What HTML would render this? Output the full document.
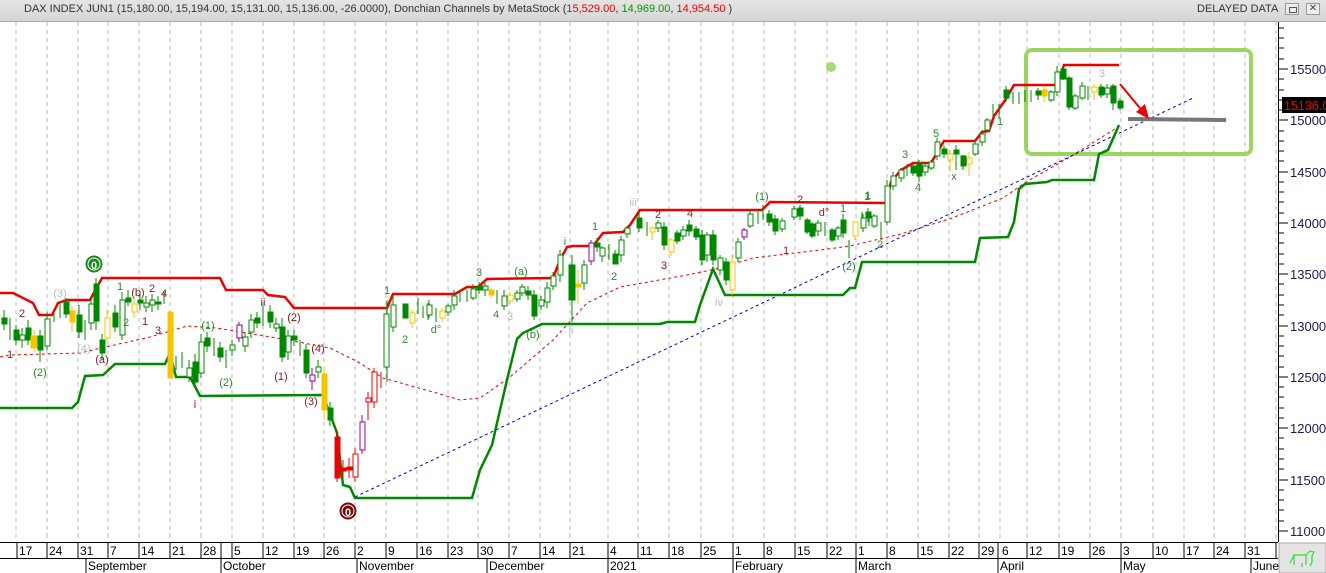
<!DOCTYPE html>
<html><head><meta charset="utf-8"><style>
html,body{margin:0;padding:0;background:#fff;width:1326px;height:573px;overflow:hidden;font-family:"Liberation Sans",sans-serif}
#hdr{position:absolute;left:0;top:0;width:1326px;height:21px;background:linear-gradient(#e4e4e4,#d6d6d6);border-bottom:1px solid #aaa;font-size:11px;color:#333;line-height:19px}
</style></head><body>
<div id="hdr"><span style="position:absolute;left:24px;top:0">DAX INDEX JUN1 (15,180.00, 15,194.00, 15,131.00, 15,136.00, -26.0000), Donchian Channels by MetaStock (<span style="color:#e00">15,529.00</span>, <span style="color:#090">14,969.00</span>, <span style="color:#e00">14,954.50</span> )</span>
<span style="position:absolute;left:1197px;top:0">DELAYED DATA</span>
<span style="position:absolute;left:1285px;top:3px;width:14px;height:12px;border:1px solid #999;background:#eee;box-sizing:border-box"><span style="position:absolute;left:3px;top:3px;width:6px;height:4px;border:1px solid #555"></span></span>
<span style="position:absolute;left:1306px;top:3px;width:14px;height:12px;border:1px solid #999;background:#eee;box-sizing:border-box;font-size:10px;line-height:10px;text-align:center;color:#444">✕</span>
</div>
<svg width="1326" height="573" style="position:absolute;left:0;top:0" xmlns="http://www.w3.org/2000/svg">
<g transform="translate(0,0)">
<g stroke="#bbb" stroke-dasharray="4,4" stroke-width="1">
<path d="M16 22V540M47 22V540M78 22V540M108 22V540M139 22V540M170 22V540M201 22V540M232 22V540M263 22V540M294 22V540M324 22V540M355 22V540M386 22V540M417 22V540M448 22V540M478 22V540M509 22V540M540 22V540M570 22V540M608 22V540M638 22V540M669 22V540M701 22V540M733 22V540M764 22V540M795 22V540M827 22V540M856 22V540M887 22V540M918 22V540M949 22V540M979 22V540M1000 22V540M1027 22V540M1059 22V540M1090 22V540M1121 22V540M1153 22V540M1184 22V540M1214 22V540M1245 22V540M1276 22V540"/>
</g>
<rect x="1026" y="50" width="225" height="104" rx="6" fill="none" stroke="#8fd14f" stroke-width="4" opacity="0.9"/>
<polyline fill="none" stroke="#e00" stroke-width="1" stroke-dasharray="3,3" points="0,357 10,355 80,353 110,346 150,337 187,326 217,328 277,338 330,348 360,363 383,378 440,394 460,400 480,398 510,377 553,340 587,303 620,287 687,275 720,268 753,258 820,250 850,246 901,234 952,218 1003,198 1026,182 1070,157 1118,127"/>
<line x1="355" y1="497" x2="1193" y2="98" stroke="#00d" stroke-width="1" stroke-dasharray="3,3"/>
<polyline fill="none" stroke="#e00" stroke-width="2.5" points="0,293 13,293 33,303 39,315 52,315 58,303 67,300 90,300 102,278 220,278 226,290 263,290 268,295 285,297 294,308 387,308 393,294 455,294 467,287 478,287 487,279 553,278 560,260 567,247 573,246 593,246 603,233 623,232 630,225 640,210 762,210 770,202 886,203 891,182 901,170 913,163 931,163 944,141 975,141 982,132 989,131 994,116 1006,99 1014,85 1057,85 1064,65 1119,65"/>
<polyline fill="none" stroke="#080" stroke-width="2.5" points="0,408 72,408 78,402 85,376 103,375 115,364 165,364 170,353 176,377 190,377 200,396 323,395 337,433 343,485 350,487 355,498 472,498 480,470 492,445 500,410 507,380 517,339 523,333 542,324 660,324 667,322 695,322 700,305 713,269 725,295 843,295 850,288 855,288 862,262 975,262 980,238 1008,237 1014,222 1019,189 1025,184 1047,182 1052,180 1094,180 1099,154 1108,150 1119,125"/>
<line x1="1128" y1="119" x2="1226" y2="120" stroke="#777" stroke-width="4"/>
<line x1="1120" y1="84" x2="1144" y2="113" stroke="#e00" stroke-width="2"/>
<polygon points="1149,119 1136,112 1145,104" fill="#e00"/>
<g stroke-width="1">
<g stroke="#080" fill="#080">
<path d="M4 310V330M10 318V340M16 325V345M28 320V345M40 330V362M54 312V322M60 302V318M66 298V318M79 305V338M85 320V340M96 278V330M102 334V360M115 305V332M128 290V306M140 294V310M158 296V310M164 292V304M176 356V370M182 352V368M195 354V388M207 332V352M214 338V356M220 342V362M226 350V368M257 312V328M270 305V328M282 318V362M294 330V346M300 340V356M306 344V378M330 402V426M418 298V314M428 303V320M423 306V318M436 308V322M460 290V302M467 290V302M479 282V294M497 290V304M528 286V300M534 290V320M547 282V308M572 255V322M597 238V252M609 244V260M615 250V264M639 212V232M647 222V236M664 222V250M677 230V244M689 220V236M696 226V240M702 230V265M713 230V265M726 258V285M758 210V224M763 205V220M769 210V226M775 215V235M800 205V220M807 218V234M812 222V238M825 222V236M832 228V242M843 214V238M849 240V258M862 212V226M868 208V222M869 212V226M881 222V240M913 164V176M919 160V182M944 146V158M956 145V170M963 155V170M999 104V118M1006 86V102M1013 92V104M1019 92V104M1025 90V102M1031 90V102M1038 88V100M1063 66V80M1069 76V110M1082 82V100M1088 86V100M1101 84V98M1107 86V98M1113 84V110M1120 98V110"/>
<rect x="2" y="318" width="5" height="6"/><rect x="14" y="330" width="5" height="10"/><rect x="26" y="328" width="5" height="12"/><rect x="38" y="336" width="5" height="14"/><rect x="64" y="302" width="5" height="12"/><rect x="77" y="315" width="5" height="17"/><rect x="94" y="284" width="5" height="37"/><rect x="100" y="340" width="5" height="13"/><rect x="113" y="313" width="5" height="14"/><rect x="126" y="298" width="5" height="4"/><rect x="138" y="300" width="5" height="3"/><rect x="156" y="302" width="5" height="2"/><rect x="193" y="362" width="5" height="20"/><rect x="205" y="338" width="5" height="8"/><rect x="218" y="348" width="5" height="9"/><rect x="255" y="318" width="5" height="5"/><rect x="268" y="312" width="5" height="10"/><rect x="280" y="327" width="5" height="30"/><rect x="292" y="336" width="5" height="4"/><rect x="304" y="350" width="5" height="23"/><rect x="328" y="408" width="5" height="12"/><rect x="403" y="304" width="5" height="14"/><rect x="477" y="286" width="5" height="4"/><rect x="526" y="291" width="5" height="4"/><rect x="532" y="295" width="5" height="21"/><rect x="569" y="265" width="6" height="35"/><rect x="595" y="243" width="5" height="4"/><rect x="613" y="254" width="5" height="10"/><rect x="637" y="218" width="5" height="10"/><rect x="662" y="227" width="5" height="18"/><rect x="675" y="233" width="5" height="8"/><rect x="687" y="225" width="5" height="6"/><rect x="694" y="229" width="5" height="8"/><rect x="700" y="235" width="5" height="25"/><rect x="711" y="235" width="5" height="25"/><rect x="724" y="262" width="5" height="18"/><rect x="767" y="214" width="5" height="8"/><rect x="773" y="219" width="5" height="12"/><rect x="798" y="208" width="5" height="8"/><rect x="805" y="220" width="5" height="12"/><rect x="810" y="224" width="5" height="12"/><rect x="830" y="230" width="5" height="10"/><rect x="841" y="220" width="5" height="13"/><rect x="866" y="212" width="5" height="6"/><rect x="911" y="166" width="5" height="7"/><rect x="917" y="163" width="5" height="13"/><rect x="942" y="149" width="5" height="5"/><rect x="954" y="150" width="5" height="4"/><rect x="961" y="156" width="5" height="10"/><rect x="1004" y="90" width="5" height="8"/><rect x="1036" y="91" width="5" height="4"/><rect x="1061" y="69" width="5" height="10"/><rect x="1067" y="78" width="5" height="29"/><rect x="1099" y="87" width="5" height="8"/><rect x="1111" y="86" width="5" height="17"/><rect x="1118" y="101" width="5" height="7"/>
</g>
<g stroke="#080" fill="#fff">
<path d="M22 328V348M47 312V350M91 296V330M122 292V340M146 296V312M152 294V312M189 360V382M201 334V378M232 340V356M245 332V352M251 314V338M263 306V326M276 318V332M288 330V360M318 360V378M387 300V382M393 296V332M429 300V318M448 304V316M454 290V310M473 284V300M485 282V296M504 290V310M517 290V302M522 284V296M541 296V310M547 284V306M553 272V290M560 250V282M584 260V290M602 246V262M621 236V262M627 226V238M652 226V234M658 220V232M683 226V240M707 232V262M720 255V275M738 238V262M750 210V228M782 218V232M794 206V220M818 220V236M838 226V240M874 214V228M863 214V232M887 180V225M893 172V190M901 168V182M907 164V176M925 162V176M931 160V170M937 138V160M975 140V156M982 130V146M987 118V132M993 104V118M1051 90V102M1057 66V96M1075 94V110M1082 84V100M1107 84V98"/>
<rect x="20" y="335" width="5" height="5"/><rect x="45" y="319" width="5" height="27"/><rect x="89" y="304" width="5" height="19"/><rect x="120" y="300" width="5" height="35"/><rect x="144" y="303" width="5" height="4"/><rect x="150" y="300" width="5" height="5"/><rect x="187" y="368" width="5" height="9"/><rect x="199" y="342" width="5" height="31"/><rect x="230" y="345" width="5" height="5"/><rect x="243" y="337" width="5" height="9"/><rect x="249" y="320" width="5" height="12"/><rect x="274" y="324" width="5" height="4"/><rect x="286" y="336" width="5" height="16"/><rect x="316" y="367" width="5" height="5"/><rect x="384" y="314" width="5" height="53"/><rect x="391" y="305" width="5" height="22"/><rect x="427" y="305" width="5" height="10"/><rect x="446" y="306" width="5" height="6"/><rect x="452" y="296" width="5" height="9"/><rect x="471" y="289" width="5" height="9"/><rect x="483" y="286" width="5" height="4"/><rect x="502" y="296" width="5" height="10"/><rect x="515" y="293" width="5" height="6"/><rect x="520" y="287" width="5" height="6"/><rect x="539" y="300" width="5" height="6"/><rect x="545" y="288" width="5" height="14"/><rect x="551" y="276" width="5" height="10"/><rect x="558" y="255" width="5" height="20"/><rect x="582" y="265" width="5" height="18"/><rect x="600" y="248" width="5" height="8"/><rect x="619" y="240" width="5" height="15"/><rect x="625" y="228" width="5" height="6"/><rect x="656" y="223" width="5" height="5"/><rect x="681" y="230" width="5" height="6"/><rect x="705" y="235" width="5" height="20"/><rect x="718" y="258" width="5" height="12"/><rect x="736" y="242" width="5" height="16"/><rect x="748" y="214" width="5" height="12"/><rect x="780" y="221" width="5" height="8"/><rect x="792" y="209" width="5" height="8"/><rect x="816" y="223" width="5" height="8"/><rect x="836" y="228" width="5" height="8"/><rect x="872" y="216" width="5" height="10"/><rect x="861" y="218" width="5" height="10"/><rect x="885" y="186" width="5" height="36"/><rect x="891" y="176" width="5" height="10"/><rect x="899" y="170" width="5" height="8"/><rect x="923" y="166" width="5" height="6"/><rect x="929" y="162" width="5" height="6"/><rect x="935" y="142" width="5" height="14"/><rect x="973" y="144" width="5" height="10"/><rect x="980" y="134" width="5" height="8"/><rect x="985" y="120" width="5" height="10"/><rect x="1049" y="92" width="5" height="8"/><rect x="1055" y="72" width="5" height="20"/><rect x="1073" y="96" width="5" height="12"/><rect x="1080" y="86" width="5" height="12"/><rect x="1105" y="88" width="5" height="6"/>
</g>
<g stroke="#f5c400" fill="#f5c400">
<path d="M34 330V352M72 306V332M107 310V342M134 298V318M170 312V378M324 366V420M412 310V328M442 308V322M491 288V298M510 292V304M578 270V304M652 226V240M671 238V256M732 255V295M855 222V240M950 150V172M969 152V176M1044 86V102M1094 84V100"/>
<rect x="31" y="336" width="6" height="12"/><rect x="70" y="311" width="5" height="11"/><rect x="168" y="312" width="5" height="66"/><rect x="322" y="374" width="5" height="36"/><rect x="489" y="290" width="5" height="5"/><rect x="576" y="284" width="5" height="3"/><rect x="1042" y="90" width="5" height="6"/>
<rect x="105" y="318" width="5" height="20" fill="#fff"/><rect x="132" y="304" width="5" height="8" fill="#fff"/><rect x="410" y="313" width="5" height="10" fill="#fff"/><rect x="440" y="311" width="5" height="7" fill="#fff"/><rect x="508" y="295" width="5" height="6" fill="#fff"/><rect x="650" y="228" width="5" height="4" fill="#fff"/><rect x="669" y="240" width="5" height="12" fill="#fff"/><rect x="730" y="262" width="5" height="28" fill="#fff"/><rect x="853" y="222" width="5" height="14" fill="#fff"/><rect x="948" y="154" width="5" height="6" fill="#fff"/><rect x="967" y="158" width="5" height="6" fill="#fff"/><rect x="1092" y="87" width="5" height="5" fill="#fff"/>
</g>
<g stroke="#e00" fill="#e00">
<path d="M337 430V482M343 460V478M349 458V478M355 448V482M368 392V420M374 368V408M381 372V388"/>
<rect x="335" y="437" width="5" height="41"/><rect x="341" y="468" width="5" height="3"/><rect x="347" y="467" width="5" height="3"/>
<rect x="353" y="454" width="5" height="23" fill="#fff"/><rect x="366" y="398" width="5" height="4" fill="#fff"/><rect x="372" y="372" width="5" height="30" fill="#fff"/>
</g>
<g stroke="#909" fill="#fff">
<path d="M239 322V342M312 368V390M362 415V454M591 240V265M744 228V240"/>
<rect x="237" y="325" width="5" height="13"/><rect x="310" y="375" width="5" height="6"/><rect x="360" y="422" width="5" height="28"/><rect x="589" y="243" width="5" height="18"/><rect x="742" y="230" width="5" height="7"/>
</g>
</g>
<g font-family="Liberation Sans,sans-serif" font-size="11" text-anchor="middle">
<g fill="#8b1a1a"><text x="22" y="317">2</text><text x="10" y="358">1</text><text x="138" y="296">(b)</text><text x="152" y="292">2</text><text x="164" y="297">4</text><text x="145" y="325">1</text><text x="158" y="334">3</text><text x="102" y="363">(a)</text><text x="195" y="408">i</text><text x="263" y="306">ii</text><text x="294" y="321">(2)</text><text x="281" y="380">(1)</text><text x="311" y="405">(3)</text><text x="318" y="352">(4)</text><text x="664" y="269">3</text><text x="658" y="218">2</text><text x="690" y="217">4</text><text x="800" y="203">2</text><text x="824" y="216">d°</text><text x="786" y="254">1</text></g>
<g fill="#2a8a2a"><text x="40" y="376">(2)</text><text x="120" y="290">1</text><text x="126" y="326">2</text><text x="208" y="329">(1)</text><text x="226" y="386">(2)</text><text x="387" y="294">1</text><text x="405" y="343">2</text><text x="436" y="333">d°</text><text x="479" y="276">3</text><text x="496" y="318">4</text><text x="521" y="275">(a)</text><text x="533" y="338">(b)</text><text x="565" y="245">i</text><text x="595" y="230">1</text><text x="614" y="280">2</text><text x="762" y="200">(1)</text><text x="843" y="212">1</text><text x="849" y="270">(2)</text><text x="867" y="200">1</text><text x="880" y="248">2</text><text x="868" y="199">1</text><text x="905" y="158">3</text><text x="918" y="191">4</text><text x="936" y="137">5</text><text x="954" y="180">x</text><text x="1000" y="125">1</text></g>
<g fill="#bbb"><text x="60" y="297">(3)</text><text x="84" y="352">(4)</text><text x="633" y="206">iii</text><text x="719" y="306">iv</text><text x="1102" y="77">3</text><text x="510" y="320">3</text><text x="571" y="334">ii</text></g>
</g>
<circle cx="94" cy="264" r="8.5" fill="#1a8a1a"/><circle cx="94" cy="264" r="6" fill="none" stroke="#fff" stroke-width="1"/>
<text x="94" y="269" font-family="Liberation Sans,sans-serif" font-size="11" font-weight="bold" fill="#fff" text-anchor="middle">0</text>
<circle cx="348" cy="511" r="8.5" fill="#7a0a0a"/><circle cx="348" cy="511" r="6" fill="none" stroke="#fff" stroke-width="1"/>
<text x="348" y="516" font-family="Liberation Sans,sans-serif" font-size="11" font-weight="bold" fill="#fff" text-anchor="middle">0</text>
<circle cx="831" cy="67" r="5" fill="#8fd14f" opacity="0.8"/>
</g>
<rect x="1279" y="22" width="47" height="520" fill="#fff"/>
<line x1="1278.5" y1="22" x2="1278.5" y2="542" stroke="#000"/>
<g stroke="#000">
<path d="M1279 28h5M1279 38h5M1279 48h5M1279 59h5M1279 69h9M1279 79h5M1279 90h5M1279 100h5M1279 110h5M1279 120h9M1279 131h5M1279 141h5M1279 151h5M1279 161h5M1279 172h9M1279 182h5M1279 192h5M1279 202h5M1279 213h5M1279 223h9M1279 233h5M1279 243h5M1279 254h5M1279 264h5M1279 274h9M1279 284h5M1279 295h5M1279 305h5M1279 315h5M1279 326h9M1279 336h5M1279 346h5M1279 356h5M1279 367h5M1279 377h9M1279 387h5M1279 397h5M1279 408h5M1279 418h5M1279 428h9M1279 438h5M1279 449h5M1279 459h5M1279 469h5M1279 480h9M1279 490h5M1279 500h5M1279 510h5M1279 521h5M1279 531h9"/>
</g>
<g font-family="Liberation Sans,sans-serif" font-size="13" fill="#1a1a5a">
<text x="1290" y="74">15500</text><text x="1290" y="125">15000</text><text x="1290" y="177">14500</text><text x="1290" y="228">14000</text><text x="1290" y="279">13500</text><text x="1290" y="331">13000</text><text x="1290" y="382">12500</text><text x="1290" y="433">12000</text><text x="1290" y="485">11500</text><text x="1290" y="536">11000</text>
</g>
<rect x="1282" y="97" width="44" height="16" fill="#000"/>
<text x="1284" y="110" font-family="Liberation Sans,sans-serif" font-size="12.5" fill="#e00">15136.00</text>
<rect x="0" y="542" width="1278" height="31" fill="#fff"/>
<g stroke="#bbb"><path d="M16 533v4M47 533v4M78 533v4M108 533v4M139 533v4M170 533v4M201 533v4M232 533v4M263 533v4M294 533v4M324 533v4M355 533v4M386 533v4M417 533v4M448 533v4M478 533v4M509 533v4M540 533v4M570 533v4M608 533v4M638 533v4M669 533v4M701 533v4M733 533v4M764 533v4M795 533v4M827 533v4M856 533v4M887 533v4M918 533v4M949 533v4M979 533v4M1000 533v4M1027 533v4M1059 533v4M1090 533v4M1121 533v4M1153 533v4M1184 533v4M1214 533v4M1245 533v4"/></g>
<line x1="0" y1="542.5" x2="1278" y2="542.5" stroke="#000"/>
<line x1="0" y1="558.5" x2="1278" y2="558.5" stroke="#000"/>
<g stroke="#000"><path d="M17 542v16M47 542v16M78 542v16M108 542v16M139 542v16M170 542v16M201 542v16M221 542v16M232 542v16M263 542v16M294 542v16M324 542v16M355 542v16M386 542v16M417 542v16M448 542v16M478 542v16M509 542v16M540 542v16M570 542v16M608 542v16M638 542v16M669 542v16M701 542v16M733 542v16M764 542v16M795 542v16M827 542v16M856 542v16M887 542v16M918 542v16M949 542v16M979 542v16M998 542v16M1027 542v16M1059 542v16M1090 542v16M1121 542v16M1153 542v16M1184 542v16M1214 542v16M1245 542v16M1276 542v16M86 558v15M221 558v15M357 558v15M487 558v15M608 558v15M733 558v15M856 558v15M998 558v15M1121 558v15M1251 558v15"/></g>
<g font-family="Liberation Sans,sans-serif" font-size="12" fill="#000">
<text x="19" y="555">17</text><text x="49" y="555">24</text><text x="80" y="555">31</text><text x="110" y="555">7</text><text x="141" y="555">14</text><text x="172" y="555">21</text><text x="203" y="555">28</text><text x="234" y="555">5</text><text x="265" y="555">12</text><text x="296" y="555">19</text><text x="326" y="555">26</text><text x="357" y="555">2</text><text x="388" y="555">9</text><text x="419" y="555">16</text><text x="450" y="555">23</text><text x="480" y="555">30</text><text x="511" y="555">7</text><text x="542" y="555">14</text><text x="572" y="555">21</text><text x="610" y="555">4</text><text x="640" y="555">11</text><text x="671" y="555">18</text><text x="703" y="555">25</text><text x="735" y="555">1</text><text x="766" y="555">8</text><text x="797" y="555">15</text><text x="829" y="555">22</text><text x="858" y="555">1</text><text x="889" y="555">8</text><text x="920" y="555">15</text><text x="951" y="555">22</text><text x="981" y="555">29</text><text x="1002" y="555">6</text><text x="1029" y="555">12</text><text x="1061" y="555">19</text><text x="1092" y="555">26</text><text x="1123" y="555">3</text><text x="1155" y="555">10</text><text x="1186" y="555">17</text><text x="1216" y="555">24</text><text x="1247" y="555">31</text>
<text x="88" y="570">September</text><text x="223" y="570">October</text><text x="359" y="570">November</text><text x="489" y="570">December</text><text x="610" y="570">2021</text><text x="735" y="570">February</text><text x="858" y="570">March</text><text x="1000" y="570">April</text><text x="1123" y="570">May</text><text x="1253" y="570">June</text>
</g>
<rect x="1279" y="543" width="47" height="30" fill="#e4e4e4" stroke="#aaa"/>
<path d="M1290 563l4-8h12l4-4 4 1-2 4v6l-2 4M1294 555v10M1306 555v10M1302 563v4" fill="none" stroke="#3d3" stroke-width="1.2"/>
</svg>
</body></html>
